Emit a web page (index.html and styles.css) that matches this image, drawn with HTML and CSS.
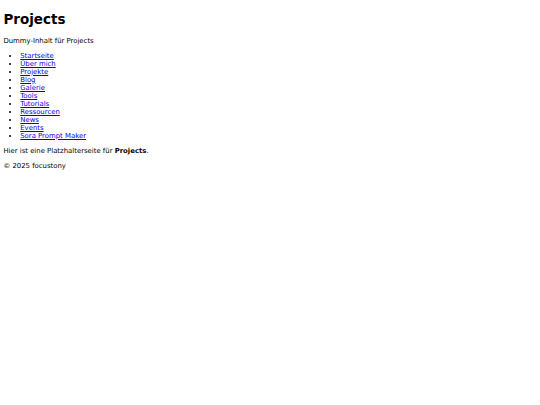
FILE: index.html
```html
<!DOCTYPE html>
<html lang="de">
<head>
<meta charset="utf-8">
<title>Projects</title>
<link rel="stylesheet" href="styles.css">
</head>
<body>
<main class="page">
  <h1 class="title">Projects</h1>
  <p class="text">Dummy-Inhalt für Projects</p>
  <ul class="nav">
    <li><a href="#">Startseite</a></li>
    <li><a href="#">Über mich</a></li>
    <li><a href="#">Projekte</a></li>
    <li><a href="#">Blog</a></li>
    <li><a href="#">Galerie</a></li>
    <li><a href="#">Tools</a></li>
    <li><a href="#">Tutorials</a></li>
    <li><a href="#">Ressourcen</a></li>
    <li><a href="#">News</a></li>
    <li><a href="#">Events</a></li>
    <li><a href="#">Sora Prompt Maker</a></li>
  </ul>
  <p class="text">Hier ist eine Platzhalterseite für <strong>Projects</strong>.</p>
</main>
<footer class="footer">
  <p class="text">© 2025 focustony</p>
</footer>
</body>
</html>
```

FILE: styles.css
```css
html {
  background: #ffffff;
}
body {
  margin: 3.375px;
  font-family: "DejaVu Sans", sans-serif;
  font-size: 6.9px;
  color: #000000;
}
.title {
  font-size: 13.5px;
  font-weight: bold;
  margin: 8px 0 9.5px;
}
.text {
  margin: 1em 0;
}
.nav {
  margin: 1em 0;
  padding-left: 16.875px;
  list-style: disc;
}
.nav a {
  color: #0000ee;
  text-decoration: underline;
}
```
